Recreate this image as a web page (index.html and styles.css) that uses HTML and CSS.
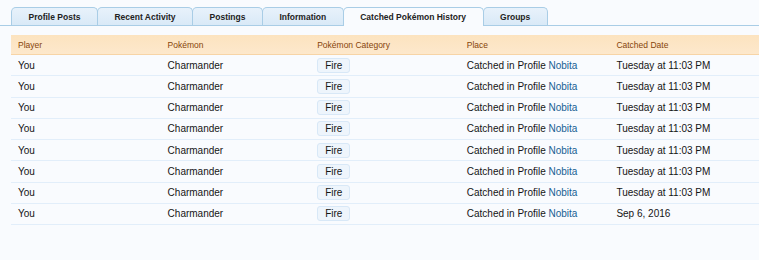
FILE: index.html
```html
<!DOCTYPE html>
<html lang="en">
<head>
<meta charset="utf-8">
<title>Catched Pokémon History</title>
<link rel="stylesheet" href="styles.css">
</head>
<body>
<div class="page">
  <nav class="tabs">
    <a class="tab">Profile Posts</a>
    <a class="tab">Recent Activity</a>
    <a class="tab">Postings</a>
    <a class="tab">Information</a>
    <a class="tab active">Catched Pokémon History</a>
    <a class="tab">Groups</a>
  </nav>
  <div class="history">
    <div class="row head">
      <div class="cell">Player</div>
      <div class="cell">Pokémon</div>
      <div class="cell">Pokémon Category</div>
      <div class="cell">Place</div>
      <div class="cell">Catched Date</div>
    </div>
    <div class="row">
      <div class="cell">You</div><div class="cell">Charmander</div>
      <div class="cell"><span class="badge">Fire</span></div>
      <div class="cell">Catched in Profile <a class="link">Nobita</a></div>
      <div class="cell">Tuesday at 11:03 PM</div>
    </div>
    <div class="row">
      <div class="cell">You</div><div class="cell">Charmander</div>
      <div class="cell"><span class="badge">Fire</span></div>
      <div class="cell">Catched in Profile <a class="link">Nobita</a></div>
      <div class="cell">Tuesday at 11:03 PM</div>
    </div>
    <div class="row">
      <div class="cell">You</div><div class="cell">Charmander</div>
      <div class="cell"><span class="badge">Fire</span></div>
      <div class="cell">Catched in Profile <a class="link">Nobita</a></div>
      <div class="cell">Tuesday at 11:03 PM</div>
    </div>
    <div class="row">
      <div class="cell">You</div><div class="cell">Charmander</div>
      <div class="cell"><span class="badge">Fire</span></div>
      <div class="cell">Catched in Profile <a class="link">Nobita</a></div>
      <div class="cell">Tuesday at 11:03 PM</div>
    </div>
    <div class="row">
      <div class="cell">You</div><div class="cell">Charmander</div>
      <div class="cell"><span class="badge">Fire</span></div>
      <div class="cell">Catched in Profile <a class="link">Nobita</a></div>
      <div class="cell">Tuesday at 11:03 PM</div>
    </div>
    <div class="row">
      <div class="cell">You</div><div class="cell">Charmander</div>
      <div class="cell"><span class="badge">Fire</span></div>
      <div class="cell">Catched in Profile <a class="link">Nobita</a></div>
      <div class="cell">Tuesday at 11:03 PM</div>
    </div>
    <div class="row">
      <div class="cell">You</div><div class="cell">Charmander</div>
      <div class="cell"><span class="badge">Fire</span></div>
      <div class="cell">Catched in Profile <a class="link">Nobita</a></div>
      <div class="cell">Tuesday at 11:03 PM</div>
    </div>
    <div class="row">
      <div class="cell">You</div><div class="cell">Charmander</div>
      <div class="cell"><span class="badge">Fire</span></div>
      <div class="cell">Catched in Profile <a class="link">Nobita</a></div>
      <div class="cell">Sep 6, 2016</div>
    </div>
  </div>
</div>
</body>
</html>
```

FILE: styles.css
```css
html, body {
  margin: 0;
  padding: 0;
  background: #f9fbfe;
}

body {
  font-family: "Liberation Sans", Arial, sans-serif;
  color: #151515;
  width: 759px;
  height: 260px;
  overflow: hidden;
}

.page {
  padding-top: 7px;
}

.tabs {
  display: flex;
  align-items: flex-end;
  padding-left: 11px;
  border-bottom: 1px solid #a9cde6;
  height: 18px;
}

.tab {
  box-sizing: border-box;
  height: 18px;
  padding: 0 16.5px;
  display: flex;
  align-items: center;
  font-size: 8.5px;
  font-weight: bold;
  color: #222;
  background: linear-gradient(#e8f2fb, #d9e9f7);
  border: 1px solid #a9cde6;
  border-bottom: none;
  border-radius: 5px 5px 0 0;
  margin-right: -1px;
  white-space: nowrap;
}

.tab.active {
  background: #f9fbfe;
  height: 19px;
  margin-bottom: -1px;
  position: relative;
}

.history {
  margin-top: 9px;
  margin-left: 11px;
  width: 748px;
}

.row {
  display: grid;
  grid-template-columns: repeat(5, 1fr);
  align-items: center;
  height: 21.25px;
  box-sizing: border-box;
  border-bottom: 1px solid #e2eefa;
  font-size: 10px;
}

.row.head {
  height: 20px;
  background: linear-gradient(#fce3bf, #fde8cc);
  border-bottom: 1px solid #f7d4a6;
  font-size: 8.5px;
  color: #86440a;
}

.cell {
  padding-left: 7px;
  white-space: nowrap;
}

.badge {
  display: inline-block;
  box-sizing: border-box;
  height: 15px;
  line-height: 13px;
  padding: 0 7px;
  background: #eef5fc;
  border: 1px solid #d8e8f7;
  border-radius: 3px;
  color: #151515;
}

.link {
  color: #176093;
}
```
